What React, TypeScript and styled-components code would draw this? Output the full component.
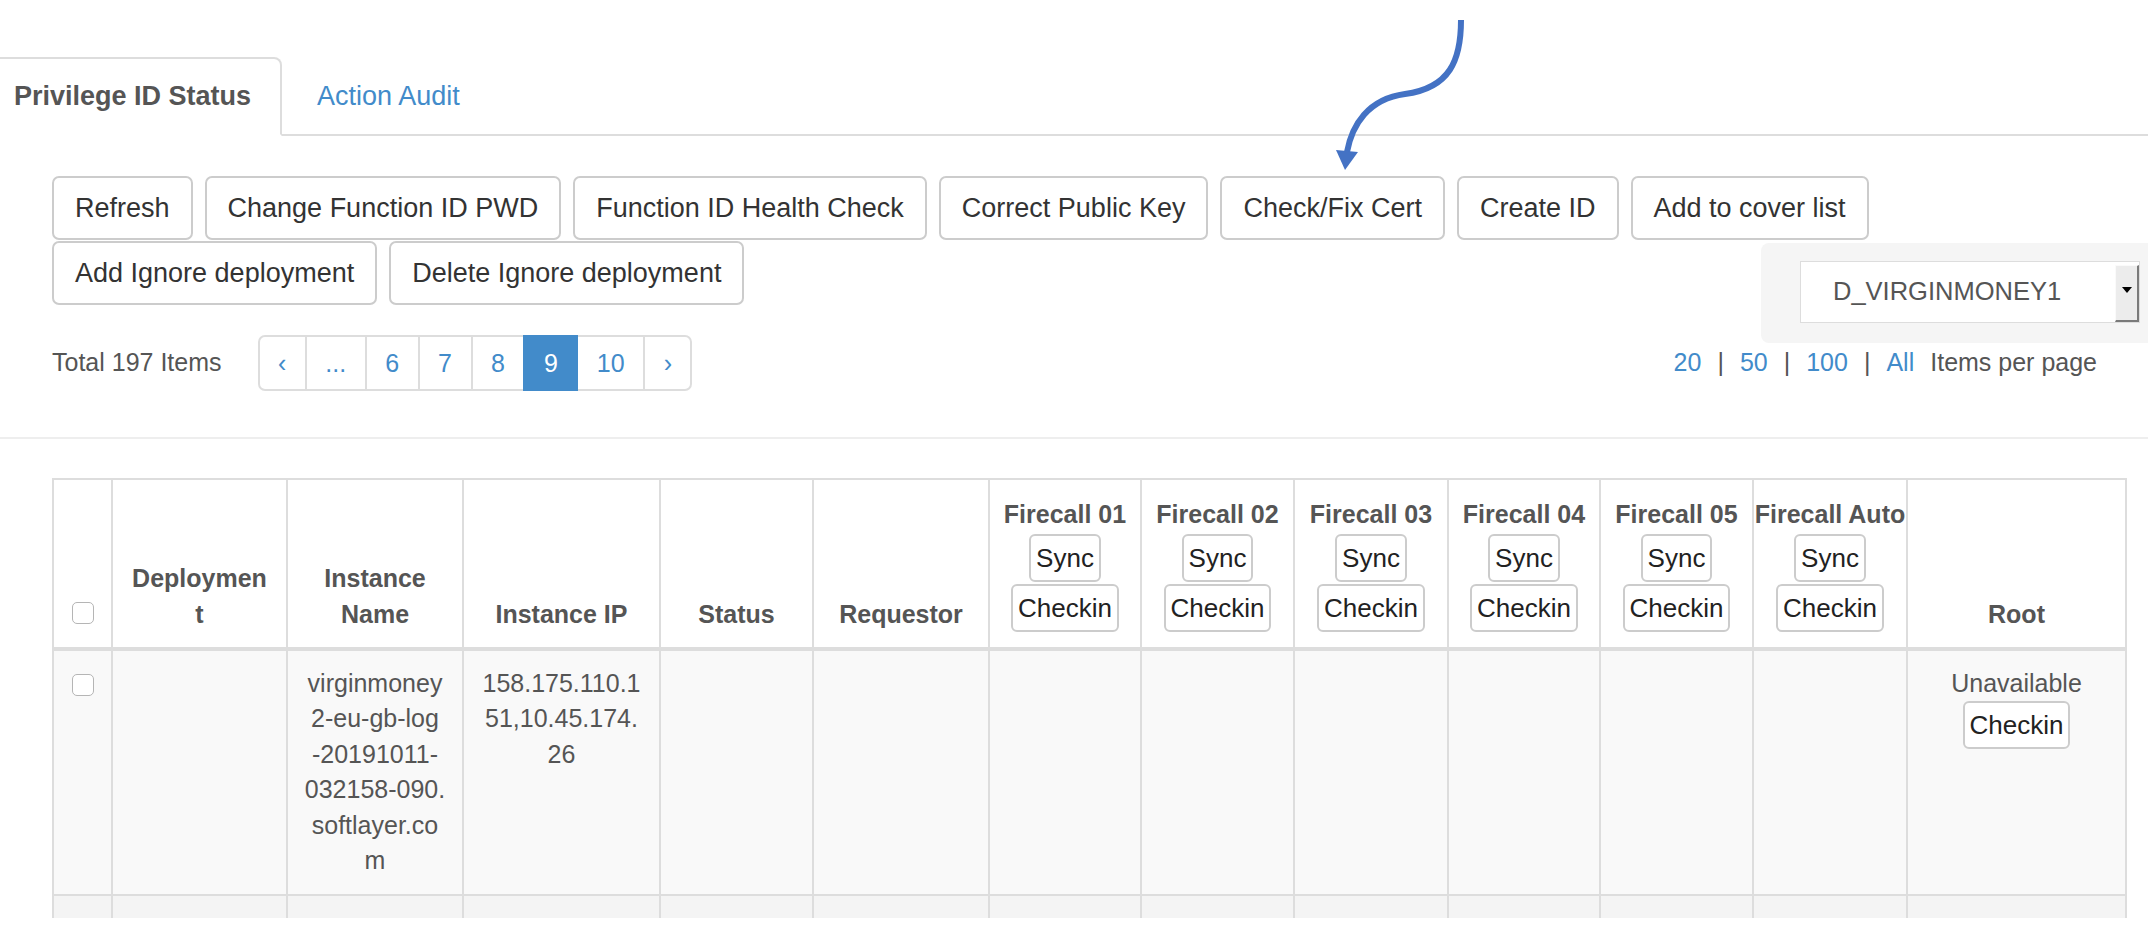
import React from "react";
import styled, { createGlobalStyle, css } from "styled-components";

const blue = "#428bca";

const GlobalStyle = createGlobalStyle`
  html, body {
    margin: 0;
    padding: 0;
    background: #fff;
  }
  body {
    font-family: "Liberation Sans", Arial, sans-serif;
    color: #555;
    overflow: hidden;
  }
  * {
    box-sizing: border-box;
  }
`;

const Page = styled.div`
  position: relative;
  width: 2148px;
  height: 946px;
  overflow: hidden;
  background: #fff;
`;

const ArrowLayer = styled.svg`
  position: absolute;
  left: 0;
  top: 0;
  pointer-events: none;
`;

const TabBar = styled.ul`
  display: flex;
  margin: 57px 0 0;
  padding: 0;
  list-style: none;
  border-bottom: 2px solid #ddd;
`;

const Tab = styled.li<{ $active?: boolean }>`
  margin: 0 4px -2px 0;
  padding: 18px 29px;
  font-size: 27px;
  line-height: 38.5px;
  color: ${blue};
  border: 2px solid transparent;
  border-radius: 8px 8px 0 0;
  &:first-child {
    margin-left: -17px;
  }
  ${(p) =>
    p.$active &&
    css`
      color: #555;
      font-weight: bold;
      background: #fff;
      border-color: #ddd #ddd transparent;
    `}
`;

const Toolbar = styled.div`
  display: grid;
  grid-template-columns: 1fr 387px;
  row-gap: 1px;
  margin-top: 40px;
  padding-left: 52px;
`;

const ButtonRow = styled.div<{ $full?: boolean }>`
  display: flex;
  gap: 12px;
  align-self: start;
  grid-column: ${(p) => (p.$full ? "1 / -1" : "1")};
`;

const Button = styled.button`
  font-family: inherit;
  font-size: 27px;
  line-height: 38px;
  padding: 11px 21px;
  color: #333;
  background: #fff;
  border: 2px solid #ccc;
  border-radius: 7px;
  white-space: nowrap;
`;

const SelectPanel = styled.div`
  grid-column: 2;
  grid-row: 2;
  margin-top: 2px;
  height: 100px;
  padding: 18px 0 0 39px;
  background: #f5f5f5;
  border-radius: 8px 0 0 8px;
`;

const SelectBox = styled.div`
  display: flex;
  width: 340px;
  height: 62px;
  background: #fff;
  border: 1px solid #ddd;
`;

const SelectText = styled.div`
  flex: 1;
  display: flex;
  align-items: center;
  padding-left: 32px;
  font-size: 25.5px;
  color: #555;
`;

const SelectArrow = styled.div`
  width: 24px;
  margin-top: 3px;
  display: flex;
  align-items: center;
  justify-content: center;
  background: #ececec;
  border-left: 1px solid #fafafa;
  border-top: 1px solid #fafafa;
  border-right: 2px solid #7a7a7a;
  border-bottom: 2px solid #7a7a7a;
  &::after {
    content: "";
    border-left: 5px solid transparent;
    border-right: 5px solid transparent;
    border-top: 6px solid #000;
    margin-bottom: 6px;
  }
`;

const PagerRow = styled.div`
  display: flex;
  align-items: center;
  justify-content: space-between;
  height: 40px;
  padding: 0 51px 0 52px;
  font-size: 25px;
`;

const PagerLeft = styled.div`
  display: flex;
  align-items: center;
`;

const Total = styled.span`
  color: #555;
`;

const Pagination = styled.ul`
  display: flex;
  margin: 0 0 0 36px;
  padding: 0;
  list-style: none;
`;

const PageItem = styled.li<{ $active?: boolean }>`
  position: relative;
  margin-left: -2px;
  padding: 8px 18.5px;
  font-size: 25px;
  line-height: 36px;
  color: ${blue};
  background: #fff;
  border: 2px solid #ddd;
  &:first-child {
    margin-left: 0;
    border-radius: 7px 0 0 7px;
  }
  &:last-child {
    border-radius: 0 7px 7px 0;
  }
  ${(p) =>
    p.$active &&
    css`
      z-index: 2;
      color: #fff;
      background: ${blue};
      border-color: ${blue};
    `}
`;

const PerPage = styled.div`
  display: flex;
  align-items: center;
  color: #555;
`;

const PerPageLink = styled.span`
  color: ${blue};
`;

const Sep = styled.span`
  margin: 0 16px;
`;

const PerPageLabel = styled.span`
  margin-left: 16px;
`;

const Divider = styled.hr`
  height: 0;
  margin: 54px 0 0;
  border: 0;
  border-top: 2px solid #eee;
`;

const TableWrap = styled.div`
  width: 2078px;
  height: 440px;
  margin: 39px 0 0 52px;
  overflow: hidden;
`;

const Table = styled.table`
  width: 2073px;
  table-layout: fixed;
  border-collapse: collapse;
`;

const Col = styled.col<{ $w: number }>`
  width: ${(p) => p.$w}px;
`;

const Th = styled.th<{ $tight?: boolean }>`
  padding: ${(p) => (p.$tight ? "16px 0 15px" : "16px 15px 15px")};
  border: 2px solid #ddd;
  border-bottom-width: 4px;
  vertical-align: bottom;
  text-align: center;
  font-size: 25px;
  line-height: 36px;
  font-weight: bold;
  color: #555;
  white-space: nowrap;
`;

const Tr = styled.tr<{ $shade: string }>`
  background: ${(p) => p.$shade};
`;

const Td = styled.td`
  padding: 15px;
  border: 2px solid #ddd;
  vertical-align: top;
  text-align: center;
  font-size: 25px;
  line-height: 35.5px;
  color: #555;
  white-space: nowrap;
`;

const Check = styled.input.attrs({ type: "checkbox" })<{ $head?: boolean }>`
  appearance: none;
  display: block;
  width: 22px;
  height: 22px;
  margin: ${(p) => (p.$head ? "0 auto 8px" : "8px auto 0")};
  background: #fff;
  border: 1.5px solid #b5b5b5;
  border-radius: 5px;
`;

const FireStack = styled.div`
  display: flex;
  flex-direction: column;
  align-items: center;
  gap: 2px;
`;

const MiniButton = styled.button`
  display: block;
  margin: 0 auto;
  font-family: inherit;
  font-size: 26px;
  line-height: 30px;
  padding: 7px 5px;
  color: #222;
  background: #fff;
  border: 2px solid #ccc;
  border-radius: 6px;
`;

const Lines: React.FC<{ lines: string[] }> = ({ lines }) => (
  <>
    {lines.map((line, i) => (
      <React.Fragment key={i}>
        {i > 0 && <br />}
        {line}
      </React.Fragment>
    ))}
  </>
);

const actionsTop = [
  "Refresh",
  "Change Function ID PWD",
  "Function ID Health Check",
  "Correct Public Key",
  "Check/Fix Cert",
  "Create ID",
  "Add to cover list",
];
const actionsBottom = ["Add Ignore deployment", "Delete Ignore deployment"];

const pages = [
  { label: "‹" },
  { label: "..." },
  { label: "6" },
  { label: "7" },
  { label: "8" },
  { label: "9", active: true },
  { label: "10" },
  { label: "›" },
];

const widths = [59, 175, 176, 197, 153, 176, 152, 153, 154, 152, 153, 154, 219];

const plainHeads: string[][] = [
  ["Deploymen", "t"],
  ["Instance", "Name"],
  ["Instance IP"],
  ["Status"],
  ["Requestor"],
];

const firecalls = ["Firecall 01", "Firecall 02", "Firecall 03", "Firecall 04", "Firecall 05", "Firecall Auto"];

type Row = { name: string[]; ip: string[]; root: string };

const rows: Row[] = [
  {
    name: ["virginmoney", "2-eu-gb-log", "-20191011-", "032158-090.", "softlayer.co", "m"],
    ip: ["158.175.110.1", "51,10.45.174.", "26"],
    root: "Unavailable",
  },
  { name: [], ip: [], root: "" },
];

export default function App() {
  return (
    <Page>
      <GlobalStyle />
      <TabBar>
        <Tab $active>Privilege ID Status</Tab>
        <Tab>Action Audit</Tab>
      </TabBar>

      <Toolbar>
        <ButtonRow $full>
          {actionsTop.map((a) => (
            <Button key={a}>{a}</Button>
          ))}
        </ButtonRow>
        <ButtonRow>
          {actionsBottom.map((a) => (
            <Button key={a}>{a}</Button>
          ))}
        </ButtonRow>
        <SelectPanel>
          <SelectBox>
            <SelectText>D_VIRGINMONEY1</SelectText>
            <SelectArrow />
          </SelectBox>
        </SelectPanel>
      </Toolbar>

      <PagerRow>
        <PagerLeft>
          <Total>Total 197 Items</Total>
          <Pagination>
            {pages.map((p) => (
              <PageItem key={p.label} $active={p.active}>
                {p.label}
              </PageItem>
            ))}
          </Pagination>
        </PagerLeft>
        <PerPage>
          <PerPageLink>20</PerPageLink>
          <Sep>|</Sep>
          <PerPageLink>50</PerPageLink>
          <Sep>|</Sep>
          <PerPageLink>100</PerPageLink>
          <Sep>|</Sep>
          <PerPageLink>All</PerPageLink>
          <PerPageLabel>Items per page</PerPageLabel>
        </PerPage>
      </PagerRow>

      <Divider />

      <TableWrap>
        <Table>
          <colgroup>
            {widths.map((w, i) => (
              <Col key={i} $w={w} />
            ))}
          </colgroup>
          <thead>
            <tr>
              <Th $tight>
                <Check $head />
              </Th>
              {plainHeads.map((h) => (
                <Th key={h.join("")}>
                  <Lines lines={h} />
                </Th>
              ))}
              {firecalls.map((f) => (
                <Th key={f} $tight>
                  <FireStack>
                    <span>{f}</span>
                    <MiniButton>Sync</MiniButton>
                    <MiniButton>Checkin</MiniButton>
                  </FireStack>
                </Th>
              ))}
              <Th>Root</Th>
            </tr>
          </thead>
          <tbody>
            {rows.map((r, i) => (
              <Tr key={i} $shade={i % 2 === 0 ? "#f9f9f9" : "#f4f4f4"}>
                <Td>
                  <Check />
                </Td>
                <Td />
                <Td>
                  <Lines lines={r.name} />
                </Td>
                <Td>
                  <Lines lines={r.ip} />
                </Td>
                <Td />
                <Td />
                {firecalls.map((f) => (
                  <Td key={f} />
                ))}
                <Td>
                  {r.root && (
                    <>
                      {r.root}
                      <MiniButton>Checkin</MiniButton>
                    </>
                  )}
                </Td>
              </Tr>
            ))}
          </tbody>
        </Table>
      </TableWrap>

      <ArrowLayer width="2148" height="200" viewBox="0 0 2148 200">
        <path
          d="M1461 20 C1461 60 1450 88 1405 94 C1368 99 1352 125 1347 152"
          fill="none"
          stroke="#4472c4"
          strokeWidth="6"
        />
        <polygon points="1336,150 1358,152 1345,170" fill="#4472c4" />
      </ArrowLayer>
    </Page>
  );
}
